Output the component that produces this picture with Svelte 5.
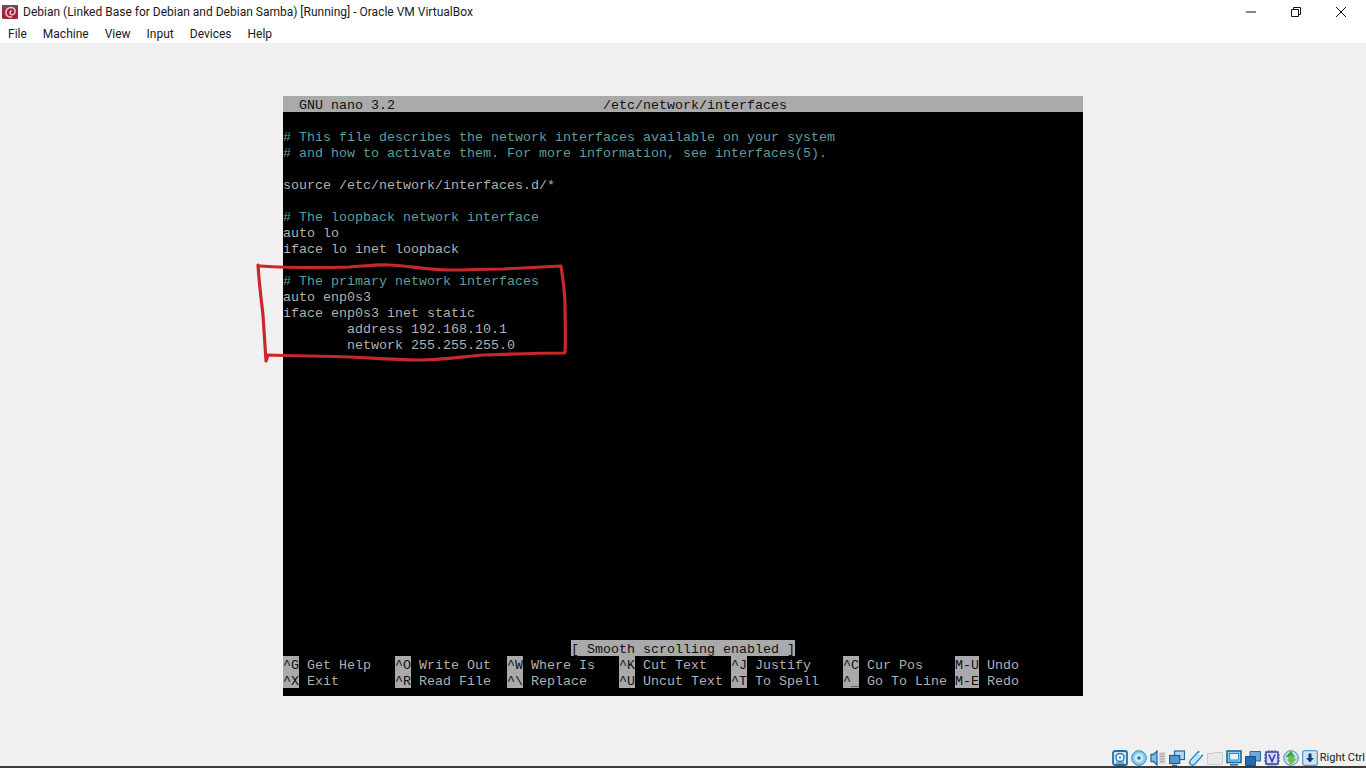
<script>
  const lines = [
    { t: '' },
    { t: '# This file describes the network interfaces available on your system', c: true },
    { t: '# and how to activate them. For more information, see interfaces(5).', c: true },
    { t: '' },
    { t: 'source /etc/network/interfaces.d/*' },
    { t: '' },
    { t: '# The loopback network interface', c: true },
    { t: 'auto lo' },
    { t: 'iface lo inet loopback' },
    { t: '' },
    { t: '# The primary network interfaces', c: true },
    { t: 'auto enp0s3' },
    { t: 'iface enp0s3 inet static' },
    { t: '        address 192.168.10.1' },
    { t: '        network 255.255.255.0' }
  ];
  const shortcuts = [
    [['^G', 'Get Help'], ['^O', 'Write Out'], ['^W', 'Where Is'], ['^K', 'Cut Text'], ['^J', 'Justify'], ['^C', 'Cur Pos'], ['M-U', 'Undo']],
    [['^X', 'Exit'], ['^R', 'Read File'], ['^\\', 'Replace'], ['^U', 'Uncut Text'], ['^T', 'To Spell'], ['^_', 'Go To Line'], ['M-E', 'Redo']]
  ];
  const menus = ['File', 'Machine', 'View', 'Input', 'Devices', 'Help'];
</script>

<div class="window">
  <header class="titlebar">
    <svg class="appicon" viewBox="0 0 16 16" aria-hidden="true">
      <rect x="0" y="1" width="16" height="14" rx="1.5" fill="#a3233b" />
      <rect x="0" y="1" width="16" height="3" fill="#5a565c" />
      <path d="M9.5 13c-3.4.5-5.6-1.7-5.6-4.6S6.3 3.4 9 3.4s4.4 2.1 4.1 4.6-2.5 3.2-4 2.4-1.4-2.9 0-3.5" fill="none" stroke="#f2c9d2" stroke-width="1.5" stroke-linecap="round" />
    </svg>
    <span class="title">Debian (Linked Base for Debian and Debian Samba) [Running] - Oracle VM VirtualBox</span>
    <div class="controls">
      <span class="ctl">
        <svg viewBox="0 0 12 12" aria-hidden="true"><path d="M1 6h10" stroke="#111" fill="none" /></svg>
      </span>
      <span class="ctl">
        <svg viewBox="0 0 12 12" aria-hidden="true"><path d="M1.5 3.5h7v7h-7zM3.5 3.5v-2h7v7h-2" stroke="#111" fill="none" /></svg>
      </span>
      <span class="ctl">
        <svg viewBox="0 0 12 12" aria-hidden="true"><path d="M1 1l10 10M11 1L1 11" stroke="#111" fill="none" /></svg>
      </span>
    </div>
  </header>

  <nav class="menubar">
    {#each menus as m}
      <span class="menu">{m}</span>
    {/each}
  </nav>

  <main class="stage">
    <div class="term">
      <div class="row head"><span class="a">GNU nano 3.2</span><span class="b">/etc/network/interfaces</span></div>
      <div class="body">
        {#each lines as l}
          <div class="row" class:comment={l.c}>{l.t}</div>
        {/each}
      </div>
      <div class="row status"><span class="msg">[ Smooth scrolling enabled ]</span></div>
      {#each shortcuts as r}
        <div class="row keys">
          {#each r as [k, label]}
            <span class="item"><span class="key">{k}</span><span class="lab">{label}</span></span>
          {/each}
        </div>
      {/each}
    </div>
    <svg class="ink" viewBox="0 0 1366 768" aria-hidden="true">
      <path d="M260 266 C290 268 320 268 350 267 C365 266 378 264 390 265 C410 266 430 270 450 270 C468 270 486 269 503 269 C522 268 542 267 561 266 C563 280 565 292 565 305 C565 322 566 338 565 353 C538 353 510 354 483 355 C460 357 438 360 417 360 C395 360 372 358 350 357 C322 356 295 356 268 355 L266 361 C265 345 264 330 263 315 C261 298 259 282 258 265" fill="none" stroke="#c8282c" stroke-width="3.2" stroke-linejoin="round" stroke-linecap="round" />
    </svg>
  </main>

  <footer class="statusbar">
    <svg class="ico" viewBox="0 0 16 16" aria-hidden="true"><rect x="1" y="1" width="14" height="14" rx="2" fill="#cfe6f5" stroke="#1e6fa8" stroke-width="1.8" /><circle cx="8" cy="7.5" r="4" fill="#eef7fc" stroke="#3a7fb0" stroke-width="1.6" /><circle cx="8" cy="7.5" r="1.1" fill="#1e6fa8" /><path d="M4 13h8" stroke="#1e6fa8" /></svg>
    <svg class="ico" viewBox="0 0 16 16" aria-hidden="true"><circle cx="8" cy="8" r="7.3" fill="#8ccbee" stroke="#2f86c0" /><circle cx="8" cy="8" r="4.4" fill="#cfeafa" /><circle cx="8" cy="8" r="1.8" fill="#2177b0" /></svg>
    <svg class="ico" viewBox="0 0 16 16" aria-hidden="true"><path d="M1 4.5h2.5L7 1v14l-3.5-3.5H1z" fill="#7fbfe6" stroke="#1e6fa8" stroke-width="1.3" /><rect x="9" y="2" width="6.5" height="12" fill="#d6d6d6" /><path d="M10 4h4.5M10 6.5h4.5M10 9h4.5M10 11.500h4.5" stroke="#a0a0a0" /></svg>
    <svg class="ico" viewBox="0 0 16 16" aria-hidden="true"><rect x="5.500" y="1" width="10" height="8.500" fill="#b8d8ee" stroke="#22689c" stroke-width="1.2" /><rect x="0.700" y="5.500" width="10" height="8" fill="#4f9ad2" stroke="#1c5a8c" stroke-width="1.2" /><path d="M3 15.300h5" stroke="#1c5a8c" stroke-width="1.2" /></svg>
    <svg class="ico" viewBox="0 0 16 16" aria-hidden="true"><path d="M10.500 1.500l4 4-7.500 8.500c-1.500 1.300-3.500 1.400-4.600.3s-1-3 .3-4.400z" fill="#bfe2f6" stroke="#2f86c0" stroke-width="1.3" /><rect x="11" y="2" width="3" height="3" fill="#fff" transform="rotate(45 12.500 3.500)" /></svg>
    <svg class="ico" viewBox="0 0 16 16" aria-hidden="true"><path d="M.5 3.500h6l1-1h8v12H.5z" fill="#e8e8e8" stroke="#cdcdcd" /></svg>
    <svg class="ico" viewBox="0 0 16 16" aria-hidden="true"><rect x="1" y="1" width="14" height="11.500" fill="#8fd0ee" stroke="#17699e" stroke-width="1.6" /><rect x="3.500" y="3.500" width="9" height="6.500" fill="#dff3fb" stroke="#2f86c0" /><path d="M4 14.800h8" stroke="#17699e" stroke-width="1.500" /></svg>
    <svg class="ico" viewBox="0 0 16 16" aria-hidden="true"><path d="M5 1.500h10.500v9.500H5z" fill="#6fa8dc" stroke="#2a6aa6" /><path d="M.5 6.500h10v9H.5z" fill="#1f6cb0" stroke="#164f86" /></svg>
    <svg class="ico" viewBox="0 0 16 16" aria-hidden="true"><rect x="2" y="2" width="12" height="12" fill="#d8dcf6" stroke="#3f49a8" stroke-width="1.600" /><path d="M0 5h2M0 8h2M0 11h2M14 5h2M14 8h2M14 11h2M5 0v2M8 0v2M11 0v2M5 14v2M8 14v2M11 14v2" stroke="#3f49a8" /><path d="M5 4.500l3 7 3-7" fill="none" stroke="#3f49a8" stroke-width="1.800" /></svg>
    <svg class="ico" viewBox="0 0 16 16" aria-hidden="true"><circle cx="8" cy="8" r="7.300" fill="#bcdcf0" stroke="#4d8fbb" /><path d="M8 1L2.500 7h3.500v3.500h3.500l2-4z" fill="#3f9e3a" /><path d="M8 15l5.500-6H10V5.500H6.500l-2 4z" fill="#6cc04a" /></svg>
    <svg class="ico" viewBox="0 0 16 16" aria-hidden="true"><rect x="0.700" y="0.700" width="14.600" height="14.600" rx="2" fill="#cfe5f5" stroke="#5b9bc9" stroke-width="1.300" /><path d="M6.500 3.500h3V8H12l-4 4.500L4 8h2.500z" fill="#123f78" /></svg>
    <span class="hostkey">Right Ctrl</span>
  </footer>
</div>

<style>
  :global(body) {
    margin: 0;
    background: #f0f0f0;
  }
  .window {
    width: 1366px;
    height: 768px;
    display: flex;
    flex-direction: column;
    overflow: hidden;
    font-family: Roboto, "Noto Sans", sans-serif;
    font-size: 12px;
    color: #1a1a1a;
  }
  .titlebar {
    height: 23px;
    background: #fff;
    display: flex;
    align-items: center;
    padding-left: 2px;
    flex: none;
  }
  .appicon {
    width: 16px;
    height: 16px;
    margin-right: 5px;
  }
  .title {
    flex: 1;
    white-space: nowrap;
  }
  .controls {
    display: flex;
    padding-right: 3px;
  }
  .ctl {
    width: 45px;
    display: flex;
    justify-content: center;
  }
  .ctl svg {
    width: 12px;
    height: 12px;
  }
  .menubar {
    height: 20px;
    box-sizing: border-box;
    padding: 2px 0 0 8px;
    background: #fff;
    display: flex;
    align-items: center;
    gap: 16px;
    flex: none;
  }
  .stage {
    position: relative;
    flex: 1;
    display: flex;
    justify-content: center;
    align-items: flex-start;
    padding-top: 53px;
    min-height: 0;
  }
  .term {
    width: 800px;
    height: 600px;
    background: #000;
    display: flex;
    flex-direction: column;
    font-family: "Liberation Mono", "DejaVu Sans Mono", monospace;
    font-size: 13.33px;
    color: #b0b0b0;
  }
  .row {
    height: 16px;
    line-height: 20px;
    white-space: pre;
    flex: none;
  }
  .head {
    background: #aaa;
    color: #111;
    display: flex;
    padding-left: 16px;
  }
  .head .a {
    width: 304px;
  }
  .comment {
    color: #5c9e9e;
  }
  .body {
    flex: 1;
  }
  .status {
    display: flex;
    padding-left: 288px;
  }
  .msg {
    background: #aaa;
    color: #111;
  }
  .keys {
    display: flex;
  }
  .keys:last-child {
    margin-bottom: 8px;
  }
  .item {
    width: 112px;
    display: flex;
    flex: none;
  }
  .key {
    background: #aaa;
    color: #111;
    margin-right: 8px;
  }
  .ink {
    position: absolute;
    left: 0;
    top: -43px;
    width: 1366px;
    height: 768px;
    pointer-events: none;
  }
  .statusbar {
    height: 22px;
    flex: none;
    box-sizing: border-box;
    display: flex;
    align-items: center;
    justify-content: flex-end;
    gap: 3px;
    padding-top: 3px;
    border-bottom: 2px solid #3a3a3a;
  }
  .ico {
    width: 16px;
    height: 16px;
    flex: none;
  }
  .hostkey {
    white-space: nowrap;
    font-size: 11px;
    margin: 0 1px 0 -1px;
  }
</style>
